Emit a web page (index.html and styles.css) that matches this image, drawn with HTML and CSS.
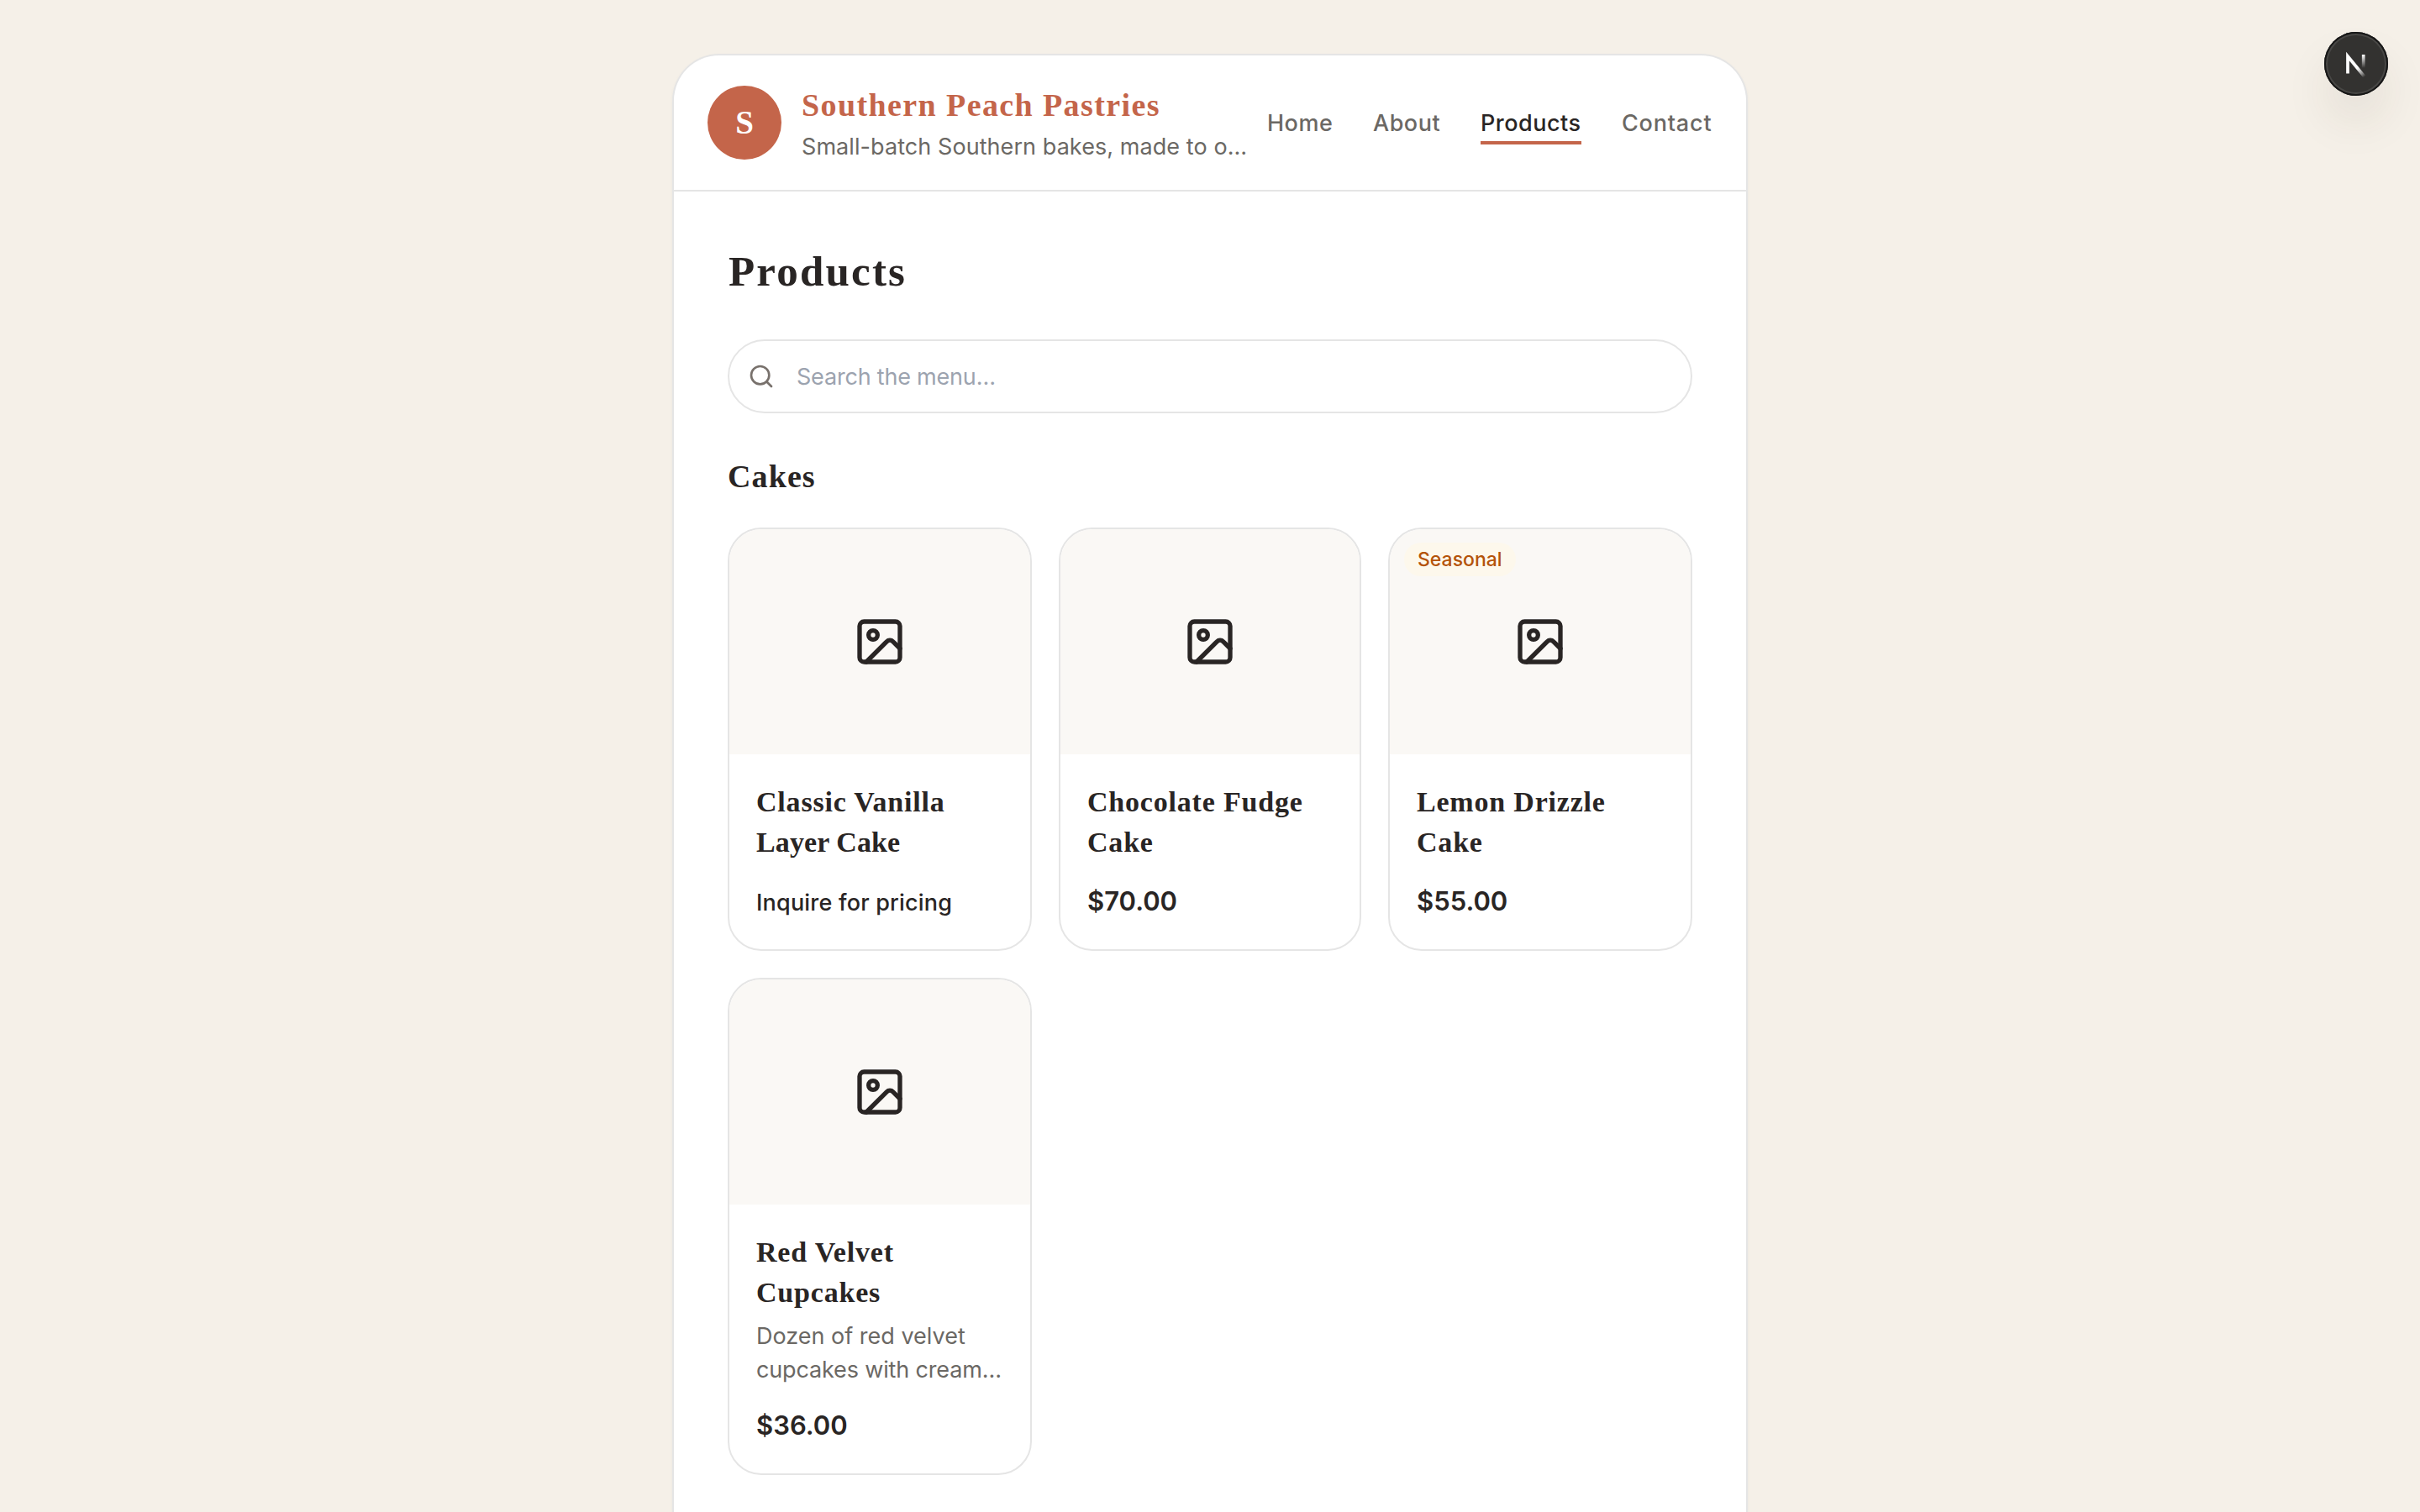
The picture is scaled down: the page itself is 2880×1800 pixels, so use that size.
FILE: index.html
```html
<!DOCTYPE html>
<html lang="en">
<head>
<meta charset="utf-8">
<title>Southern Peach Pastries</title>
<link rel="stylesheet" href="styles.css">
</head>
<body>
<svg class="sprite" aria-hidden="true">
  <symbol id="image" viewBox="0 0 24 24">
    <rect x="3" y="3" width="18" height="18" rx="2"/>
    <circle cx="9" cy="9" r="2"/>
    <path d="m21 15-3.086-3.086a2 2 0 0 0-2.828 0L6 21"/>
  </symbol>
</svg>
<div class="shop">
  <header class="header">
    <div class="logo">S</div>
    <div class="brand">
      <div class="brand-name">Southern Peach Pastries</div>
      <div class="brand-tagline">Small-batch Southern bakes, made to o…</div>
    </div>
    <nav class="nav">
      <a class="nav-link home">Home</a>
      <a class="nav-link about">About</a>
      <a class="nav-link products active">Products</a>
      <a class="nav-link contact">Contact</a>
    </nav>
  </header>
  <main class="main">
    <h1 class="page-title">Products</h1>
    <div class="search">
      <svg class="icon search-icon" viewBox="0 0 24 24"><circle cx="11" cy="11" r="8"/><path d="m21 21-4.3-4.3"/></svg>
      <span class="placeholder">Search the menu…</span>
    </div>
    <h2 class="section-title">Cakes</h2>
    <div class="grid">
      <article class="card">
        <div class="thumb"><svg class="icon"><use href="#image"/></svg></div>
        <div class="card-body">
          <h3 class="card-title">Classic Vanilla<br><span class="tight">Layer Cake</span></h3>
          <div class="inquire">Inquire for pricing</div>
        </div>
      </article>
      <article class="card">
        <div class="thumb"><svg class="icon"><use href="#image"/></svg></div>
        <div class="card-body">
          <h3 class="card-title">Chocolate Fudge<br>Cake</h3>
          <div class="price">$70.00</div>
        </div>
      </article>
      <article class="card">
        <div class="thumb"><span class="badge">Seasonal</span><svg class="icon"><use href="#image"/></svg></div>
        <div class="card-body">
          <h3 class="card-title">Lemon Drizzle<br>Cake</h3>
          <div class="price">$55.00</div>
        </div>
      </article>
      <article class="card">
        <div class="thumb"><svg class="icon"><use href="#image"/></svg></div>
        <div class="card-body">
          <h3 class="card-title">Red Velvet<br>Cupcakes</h3>
          <p class="desc">Dozen of red velvet<br><span class="desc-end">cupcakes with cream…</span></p>
          <div class="price">$36.00</div>
        </div>
      </article>
    </div>
  </main>
</div>
<div class="dev-badge">
  <svg width="76" height="76" viewBox="0 0 76 76" fill="none" stroke-width="3.7">
    <defs>
      <linearGradient id="diag" gradientUnits="userSpaceOnUse" x1="40" y1="42.500" x2="48.500" y2="53">
        <stop stop-color="#fff"/><stop offset=".6" stop-color="#fff" stop-opacity=".5"/><stop offset="1" stop-color="#fff" stop-opacity="0"/>
      </linearGradient>
      <linearGradient id="stem" gradientUnits="userSpaceOnUse" x1="46" y1="27" x2="46" y2="43">
        <stop stop-color="#fff"/><stop offset="1" stop-color="#fff" stop-opacity="0"/>
      </linearGradient>
    </defs>
    <path d="M48.500 54 28 29v20.500" stroke="url(#diag)"/>
    <path d="M46.700 27v22" stroke="url(#stem)"/>
  </svg>
</div>
</body>
</html>
```
FILE: styles.css
```css
* { box-sizing: border-box; margin: 0; padding: 0; }

body {
  height: 1800px;
  padding-top: 64px;
  overflow: hidden;
  background: #f5f0e8;
  color: #292524;
  font-family: Inter, "Liberation Sans", sans-serif;
  font-size: 27px;
  line-height: 40px;
}

.sprite { display: none; }

.icon {
  fill: none;
  stroke: currentColor;
  stroke-width: 2;
  stroke-linecap: round;
  stroke-linejoin: round;
}

.shop {
  width: 1280px;
  height: 1736px;
  margin: 0 auto;
  background: #fff;
  border: 2px solid #e5e5e5;
  border-bottom: 0;
  border-radius: 56px 56px 0 0;
  box-shadow: 0 2px 4px rgba(0, 0, 0, .04);
}

.header {
  display: flex;
  align-items: center;
  height: 162px;
  padding: 0 40px;
  border-bottom: 2px solid #e5e5e5;
}

.logo, .brand-name, .page-title, .section-title, .card-title {
  font-family: "Liberation Serif", serif;
  font-weight: 700;
}

.logo {
  flex: none;
  width: 88px;
  height: 88px;
  border-radius: 50%;
  background: #c4654a;
  color: #fff;
  font-size: 39px;
  line-height: 87px;
  text-align: center;
}

.brand {
  display: flex;
  flex-direction: column;
  gap: 3px;
  width: 530px;
  margin: 0 24px;
  padding-top: 1px;
  white-space: nowrap;
}

.brand-name {
  color: #c4654a;
  font-size: 38px;
  line-height: 54px;
  letter-spacing: 1.4px;
}

.brand-tagline { color: #6b6864; letter-spacing: .07px; }

.nav {
  display: flex;
  gap: 48px;
  padding-top: 2px;
  color: #6b6864;
  font-weight: 450;
  white-space: nowrap;
}

.nav-link { position: relative; letter-spacing: .5px; }
.home { width: 78px; }
.about { width: 80px; }
.products { width: 120px; }
.contact { width: 108px; letter-spacing: .8px; }
.active { color: #292524; }
.active::after {
  content: "";
  position: absolute;
  left: 0;
  right: 0;
  bottom: -5px;
  height: 4px;
  background: #c4654a;
}

.main { padding: 64px 64px 0; }

.page-title {
  margin-bottom: 50px;
  padding-left: 1px;
  font-size: 51px;
  line-height: 62px;
  letter-spacing: 2.2px;
}

.search {
  display: flex;
  align-items: center;
  gap: 24px;
  height: 88px;
  padding: 0 22px;
  border: 2px solid #e5e5e5;
  border-radius: 44px;
}

.search-icon { width: 32px; height: 32px; color: #78716c; }
.placeholder { padding: 2px 0 0 2px; color: #9ca3af; letter-spacing: -.2px; }

.section-title {
  margin: 48px 0 34px;
  font-size: 38px;
  line-height: 54px;
  letter-spacing: 1.1px;
}

.grid {
  display: grid;
  grid-template-columns: 362px 360px 362px;
  gap: 32px;
}

.card {
  overflow: hidden;
  border: 2px solid #e5e5e5;
  border-radius: 40px;
}

.thumb {
  position: relative;
  display: flex;
  align-items: center;
  justify-content: center;
  height: 268px;
  background: #faf8f5;
}

.thumb .icon { width: 64px; height: 64px; }

.badge {
  position: absolute;
  top: 16px;
  left: 17px;
  padding: 4px 16px;
  border-radius: 20px;
  background: #fdf8ec;
  color: #b45309;
  font-size: 23px;
  font-weight: 450;
  line-height: 32px;
}

.card-body { padding: 33px 32px; white-space: nowrap; }

.card-title {
  font-size: 34px;
  line-height: 48px;
  letter-spacing: .8px;
}

.tight { letter-spacing: .1px; }

.price, .inquire { height: 48px; margin-top: 22px; line-height: 48px; }
.price { font-size: 31px; font-weight: 600; }
.inquire { padding-top: 2px; font-weight: 450; letter-spacing: .2px; }

.desc { margin-top: 8px; color: #6b6864; }
.desc-end { letter-spacing: -.15px; }

.dev-badge {
  position: absolute;
  top: 38px;
  left: 2766px;
  width: 76px;
  height: 76px;
  border-radius: 50%;
  background: #333230;
  box-shadow: inset 0 0 0 2px #171717, inset 0 0 0 4px #484745, 0 32px 56px -4px rgba(60, 50, 30, .1);
}
```
